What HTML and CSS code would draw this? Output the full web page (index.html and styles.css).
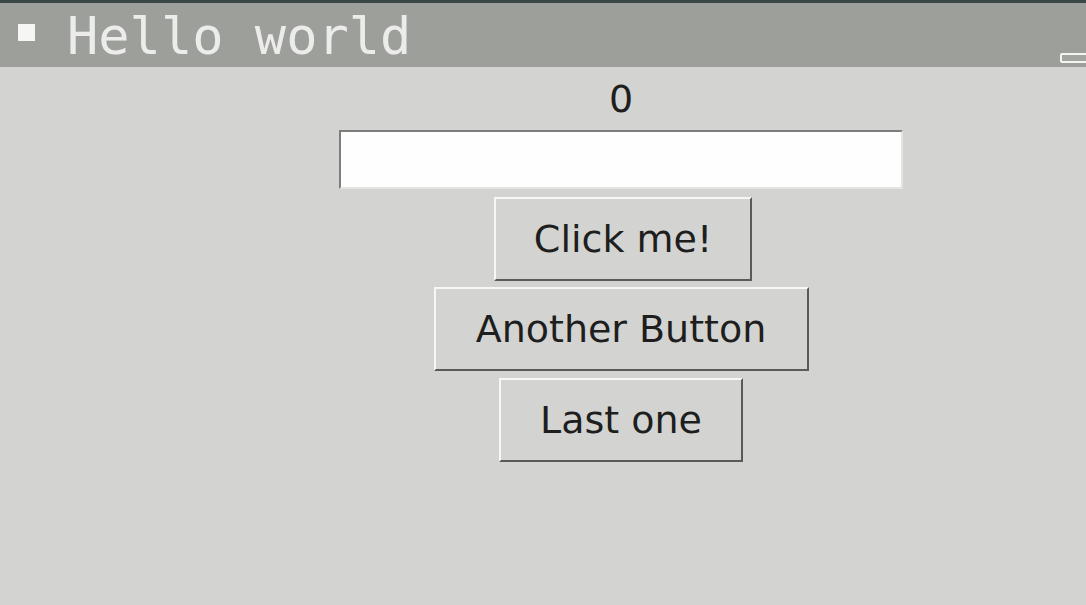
FILE: index.html
```html
<!DOCTYPE html>
<html>
<head>
<meta charset="utf-8">
<link rel="stylesheet" href="styles.css">
<title>Hello world</title>
</head>
<body>
<div class="window">
  <div class="titlebar">
    <span class="menu-square"></span>
    <span class="title">Hello world</span>
    <span class="minimize"></span>
  </div>
  <div class="content">
    <div class="label">0</div>
    <div class="entry"></div>
    <button class="btn btn-click">Click me!</button>
    <button class="btn btn-another">Another Button</button>
    <button class="btn btn-last">Last one</button>
  </div>
</div>
</body>
</html>
```

FILE: styles.css
```css
html, body {
  margin: 0;
  padding: 0;
  width: 1086px;
  height: 605px;
  overflow: hidden;
  background: #d3d4d1;
}

.window {
  display: flex;
  flex-direction: column;
  height: 605px;
}

.titlebar {
  position: relative;
  height: 64px;
  border-top: 3px solid #3b4646;
  background: #9d9f9b;
  display: flex;
  align-items: center;
  box-sizing: content-box;
}

.menu-square {
  width: 17px;
  height: 17px;
  background: #f6f6f4;
  margin-left: 18px;
  margin-top: -6px;
}

.title {
  font-family: "DejaVu Sans Mono", monospace;
  font-size: 52px;
  color: #ececea;
  margin-left: 32px;
  line-height: 64px;
  margin-top: 2px;
}

.minimize {
  position: absolute;
  left: 1060px;
  top: 50px;
  width: 30px;
  height: 6px;
  border: 2px solid #f4f4f2;
  border-radius: 2px;
  background: #a3a5a1;
}

.content {
  display: flex;
  flex-direction: column;
  align-items: center;
  padding-left: 156px;
  font-family: "DejaVu Sans", sans-serif;
  color: #1e1e1e;
}

.label {
  font-size: 38px;
  line-height: 44px;
  margin-top: 10px;
}

.entry {
  width: 560px;
  height: 55px;
  margin-top: 9px;
  background: #fefefe;
  border-top: 2px solid #7d7e7b;
  border-left: 2px solid #7d7e7b;
  border-right: 2px solid #e4e5e2;
  border-bottom: 2px solid #e4e5e2;
}

.btn {
  box-sizing: border-box;
  white-space: nowrap;
  font-family: "DejaVu Sans", sans-serif;
  font-size: 38px;
  line-height: 44px;
  color: #1e1e1e;
  background: #d3d4d1;
  padding: 18px 0;
  height: 84px;
  border-style: solid;
  border-width: 2px;
  border-color: #f7f7f5 #5a5b59 #5a5b59 #f7f7f5;
  border-radius: 0;
  margin: 0;
  text-align: center;
}

.btn-click {
  margin-top: 8px;
  margin-left: 4px;
  width: 258px;
}

.btn-another {
  margin-top: 6px;
  width: 375px;
}

.btn-last {
  margin-top: 7px;
  width: 244px;
}
```
